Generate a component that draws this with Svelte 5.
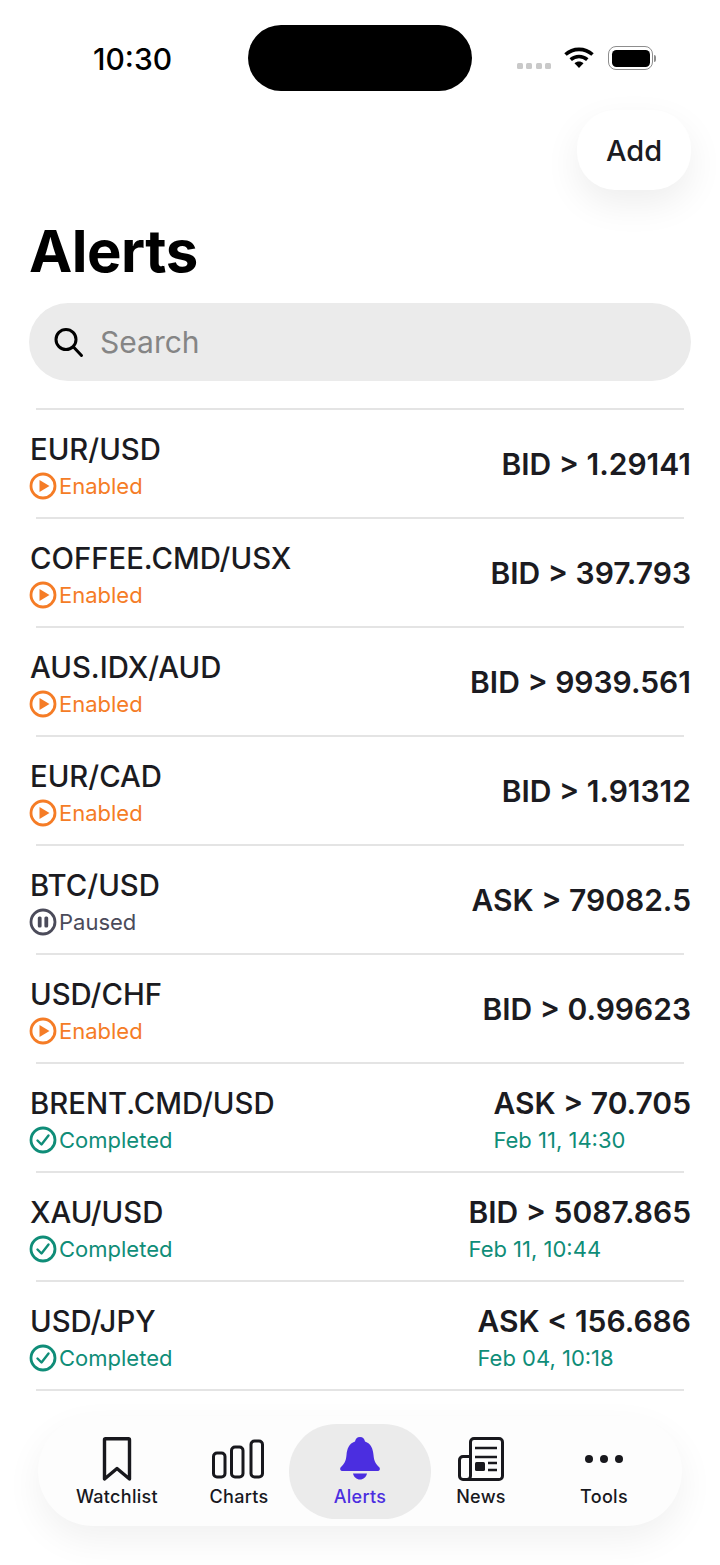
<script>
  const alerts = [
    { pair: 'EUR/USD', status: 'enabled', rule: 'BID > 1.29141' },
    { pair: 'COFFEE.CMD/USX', status: 'enabled', rule: 'BID > 397.793' },
    { pair: 'AUS.IDX/AUD', status: 'enabled', rule: 'BID > 9939.561' },
    { pair: 'EUR/CAD', status: 'enabled', rule: 'BID > 1.91312' },
    { pair: 'BTC/USD', status: 'paused', rule: 'ASK > 79082.5' },
    { pair: 'USD/CHF', status: 'enabled', rule: 'BID > 0.99623' },
    { pair: 'BRENT.CMD/USD', status: 'completed', rule: 'ASK > 70.705', date: 'Feb 11, 14:30' },
    { pair: 'XAU/USD', status: 'completed', rule: 'BID > 5087.865', date: 'Feb 11, 10:44' },
    { pair: 'USD/JPY', status: 'completed', rule: 'ASK < 156.686', date: 'Feb 04, 10:18' }
  ];

  const labels = { enabled: 'Enabled', paused: 'Paused', completed: 'Completed' };
</script>

<div class="screen">
  <div class="status-bar">
    <span class="time">10:30</span>
    <div class="island"></div>
    <div class="status-icons">
      <div class="signal"><i></i><i></i><i></i><i></i></div>
      <svg class="wifi" width="30" height="22" viewBox="0 0 30 22">
        <path d="M1.5 7.5C9 .6 21 .6 28.5 7.500" fill="none" stroke="#000" stroke-width="3.600" />
        <path d="M6.700 12.700C11.500 8.500 18.500 8.500 23.300 12.700" fill="none" stroke="#000" stroke-width="3.600" />
        <path d="M10.500 16.200C13 14 17 14 19.500 16.200L15 21Z" fill="#000" />
      </svg>
      <div class="battery"><div class="battery-body"><div class="battery-fill"></div></div><div class="battery-cap"></div></div>
    </div>
  </div>

  <div class="top-actions">
    <button class="add">Add</button>
  </div>

  <h1>Alerts</h1>

  <div class="search">
    <svg width="32" height="32" viewBox="0 0 32 32" fill="none" stroke="#000" stroke-width="3">
      <circle cx="13" cy="13.500" r="10" />
      <path d="M20.500 21l8 8.500" stroke-linecap="round" />
    </svg>
    <span>Search</span>
  </div>

  <div class="list">
    {#each alerts as a}
      <div class="divider"></div>
      <div class="row">
        <div class="left">
          <div class="pair">{a.pair}</div>
          <div class="status {a.status}">
            <svg width="28" height="28" viewBox="0 0 28 28" fill="none">
              <circle cx="14" cy="14" r="12" stroke="currentColor" stroke-width="2.800" />
              {#if a.status === 'enabled'}
                <path d="M10.500 8L20.500 14l-10 6Z" fill="currentColor" />
              {:else if a.status === 'paused'}
                <rect x="8.800" y="8.500" width="3.800" height="11" rx="1.500" fill="currentColor" />
                <rect x="15.400" y="8.500" width="3.800" height="11" rx="1.500" fill="currentColor" />
              {:else}
                <path d="M8.500 14.500l4 4 7-9" stroke="currentColor" stroke-width="2.400" stroke-linecap="round" stroke-linejoin="round" />
              {/if}
            </svg>
            <span>{labels[a.status]}</span>
          </div>
        </div>
        <div class="right" class:dated={a.date}>
          <div class="rule">{a.rule}</div>
          {#if a.date}
            <div class="date">{a.date}</div>
          {/if}
        </div>
      </div>
    {/each}
    <div class="divider"></div>
  </div>

  <div class="tabs">
    <div class="tab">
      <svg width="44" height="46" viewBox="0 0 44 46" fill="none" stroke="#18181d" stroke-width="3.400" stroke-linejoin="round">
        <path d="M10.500 2.700h23a1 1 0 0 1 1 1V43L22 32.500 9.500 43V3.700a1 1 0 0 1 1-1Z" />
      </svg>
      <span>Watchlist</span>
    </div>
    <div class="tab">
      <svg width="56" height="46" viewBox="0 0 56 46" fill="none" stroke="#18181d" stroke-width="3">
        <rect x="2.500" y="17" width="11.500" height="24" rx="3.500" />
        <rect x="20.500" y="11" width="11.500" height="30" rx="3.500" />
        <rect x="40" y="5" width="11.500" height="36" rx="3.500" />
      </svg>
      <span>Charts</span>
    </div>
    <div class="tab active">
      <svg width="44" height="46" viewBox="0 0 44 46" fill="#4b2ee0">
        <path d="M22 1c3 0 4.500 2 5 4.500C33 7.500 35 13 35.500 19c.5 6 2 8.500 5.500 12 1.500 1.500 1 4-1.500 4h-35C2 35 1.500 32.500 3 31c3.500-3.500 5-6 5.500-12C9 13 11 7.500 17 5.500 17.500 3 19 1 22 1Z" />
        <path d="M15 37.500h14c-.8 3.500-3.500 6-7 6s-6.200-2.500-7-6Z" />
      </svg>
      <span>Alerts</span>
    </div>
    <div class="tab">
      <svg width="48" height="46" viewBox="0 0 48 46" fill="none" stroke="#18181d" stroke-width="3" stroke-linejoin="round">
        <path d="M13.500 40V6A3.500 3.500 0 0 1 17 2.500h25A3.500 3.500 0 0 1 45.500 6v34a3.500 3.500 0 0 1-3.500 3.500H6" />
        <path d="M13.500 20.500H6A3.500 3.500 0 0 0 2.500 24v16A3.500 3.500 0 0 0 6 43.500h4A3.500 3.500 0 0 0 13.500 40" />
        <path d="M18 12h22M18 21h22M31 27h9M31 34h9" stroke-width="2.400" />
        <rect x="18" y="26" width="10" height="9" rx="1.500" fill="#18181d" stroke="none" />
      </svg>
      <span>News</span>
    </div>
    <div class="tab">
      <svg width="44" height="46" viewBox="0 0 44 46" fill="#18181d">
        <circle cx="7" cy="23" r="4" />
        <circle cx="22" cy="23" r="4" />
        <circle cx="37" cy="23" r="4" />
      </svg>
      <span>Tools</span>
    </div>
  </div>
</div>

<style>
  :global(body) {
    margin: 0;
    background: #fff;
  }

  .screen {
    width: 720px;
    height: 1565px;
    overflow: hidden;
    display: flex;
    flex-direction: column;
    font-family: Inter, "Noto Sans", sans-serif;
    color: #1b1b21;
    background: #fff;
  }

  .status-bar {
    height: 110px;
    flex: none;
    display: flex;
    align-items: flex-start;
    box-sizing: border-box;
    padding: 25px 64px 0 93px;
  }

  .time {
    width: 155px;
    margin-top: 16px;
    font-size: 30px;
    line-height: 36px;
    font-weight: 500;
    color: #000;
  }

  .island {
    width: 224px;
    height: 66px;
    border-radius: 33px;
    background: #000;
  }

  .status-icons {
    margin-left: auto;
    margin-top: 21px;
    display: flex;
    align-items: center;
  }

  .signal {
    display: flex;
    gap: 3.500px;
    margin-right: 13px;
    margin-top: 16px;
  }

  .signal i {
    width: 6px;
    height: 6px;
    border-radius: 1.500px;
    background: #c9c9c9;
  }

  .wifi {
    margin-top: -1px;
  }

  .battery {
    display: flex;
    align-items: center;
    margin-left: 14px;
  }

  .battery-body {
    width: 45px;
    height: 24px;
    box-sizing: border-box;
    border: 1.500px solid #8d8d8d;
    border-radius: 8px;
    padding: 2.500px;
  }

  .battery-fill {
    height: 100%;
    border-radius: 4.500px;
    background: #000;
  }

  .battery-cap {
    width: 2px;
    height: 7px;
    margin-left: 1px;
    border-radius: 0 2px 2px 0;
    background: #8d8d8d;
  }

  .top-actions {
    height: 80px;
    flex: none;
    display: flex;
    justify-content: flex-end;
    padding-right: 29px;
  }

  .add {
    width: 114px;
    height: 80px;
    border: none;
    border-radius: 38px;
    background: #fff;
    font: 500 29px Inter, sans-serif;
    color: #1b1b21;
    box-shadow: 0 14px 36px rgba(0, 0, 0, 0.07);
  }

  h1 {
    margin: 26px 0 0 29px;
    font-size: 58px;
    line-height: 70px;
    font-weight: 700;
    color: #000;
    letter-spacing: -0.5px;
  }

  .search {
    margin: 17px 29px 0;
    height: 78px;
    flex: none;
    box-sizing: border-box;
    padding-left: 24px;
    display: flex;
    align-items: center;
    gap: 15px;
    border-radius: 39px;
    background: #ebebeb;
    font-size: 30px;
    color: #858585;
  }

  .list {
    margin-top: 27px;
    flex: none;
  }

  .divider {
    height: 1.500px;
    margin: 0 36px;
    background: #e4e4e4;
  }

  .row {
    height: 107.500px;
    padding: 0 29px 0 30px;
    display: flex;
    justify-content: space-between;
    align-items: center;
  }

  .left {
    display: flex;
    flex-direction: column;
    gap: 5px;
    margin-top: 6px;
  }

  .pair {
    font-size: 29.300px;
    line-height: 34px;
    font-weight: 500;
    color: #1b1b21;
  }

  .rule {
    font-size: 30px;
    line-height: 34px;
    font-weight: 600;
    color: #1b1b21;
  }

  .status {
    display: flex;
    align-items: center;
    gap: 2px;
    font-size: 22px;
    line-height: 28px;
    margin-left: -1px;
  }

  .enabled {
    color: #f57c26;
  }

  .paused {
    color: #4b4b5a;
  }

  .completed {
    color: #0f8d78;
  }

  .right {
    text-align: right;
    margin-top: 2px;
  }

  .right.dated {
    margin-top: 6px;
  }

  .date {
    text-align: left;
    margin-top: 6px;
    font-size: 22px;
    line-height: 28px;
    color: #0f8d78;
  }

  .tabs {
    margin: 25px 38px 0;
    height: 110px;
    flex: none;
    box-sizing: border-box;
    padding: 8px 19.500px 0;
    display: flex;
    align-items: flex-start;
    border-radius: 55px;
    background: #fdfdfd;
    box-shadow: 0 14px 36px rgba(0, 0, 0, 0.06);
  }

  .tab {
    width: 121px;
    height: 95px;
    flex: none;
    display: flex;
    flex-direction: column;
    align-items: center;
    padding-top: 12px;
    box-sizing: border-box;
    font-size: 18px;
    font-weight: 450;
    line-height: 22px;
    letter-spacing: 0.3px;
    color: #18181d;
  }

  .tab:first-child {
    margin-left: -1px;
    margin-right: 1px;
  }

  .tab:last-child {
    margin-left: 2px;
  }

  .tab svg {
    margin-bottom: 4px;
  }

  .tab.active {
    width: 142px;
    margin: 0 -10.500px;
    border-radius: 48px;
    background: #ebebeb;
    color: #4b2ee0;
  }
</style>
